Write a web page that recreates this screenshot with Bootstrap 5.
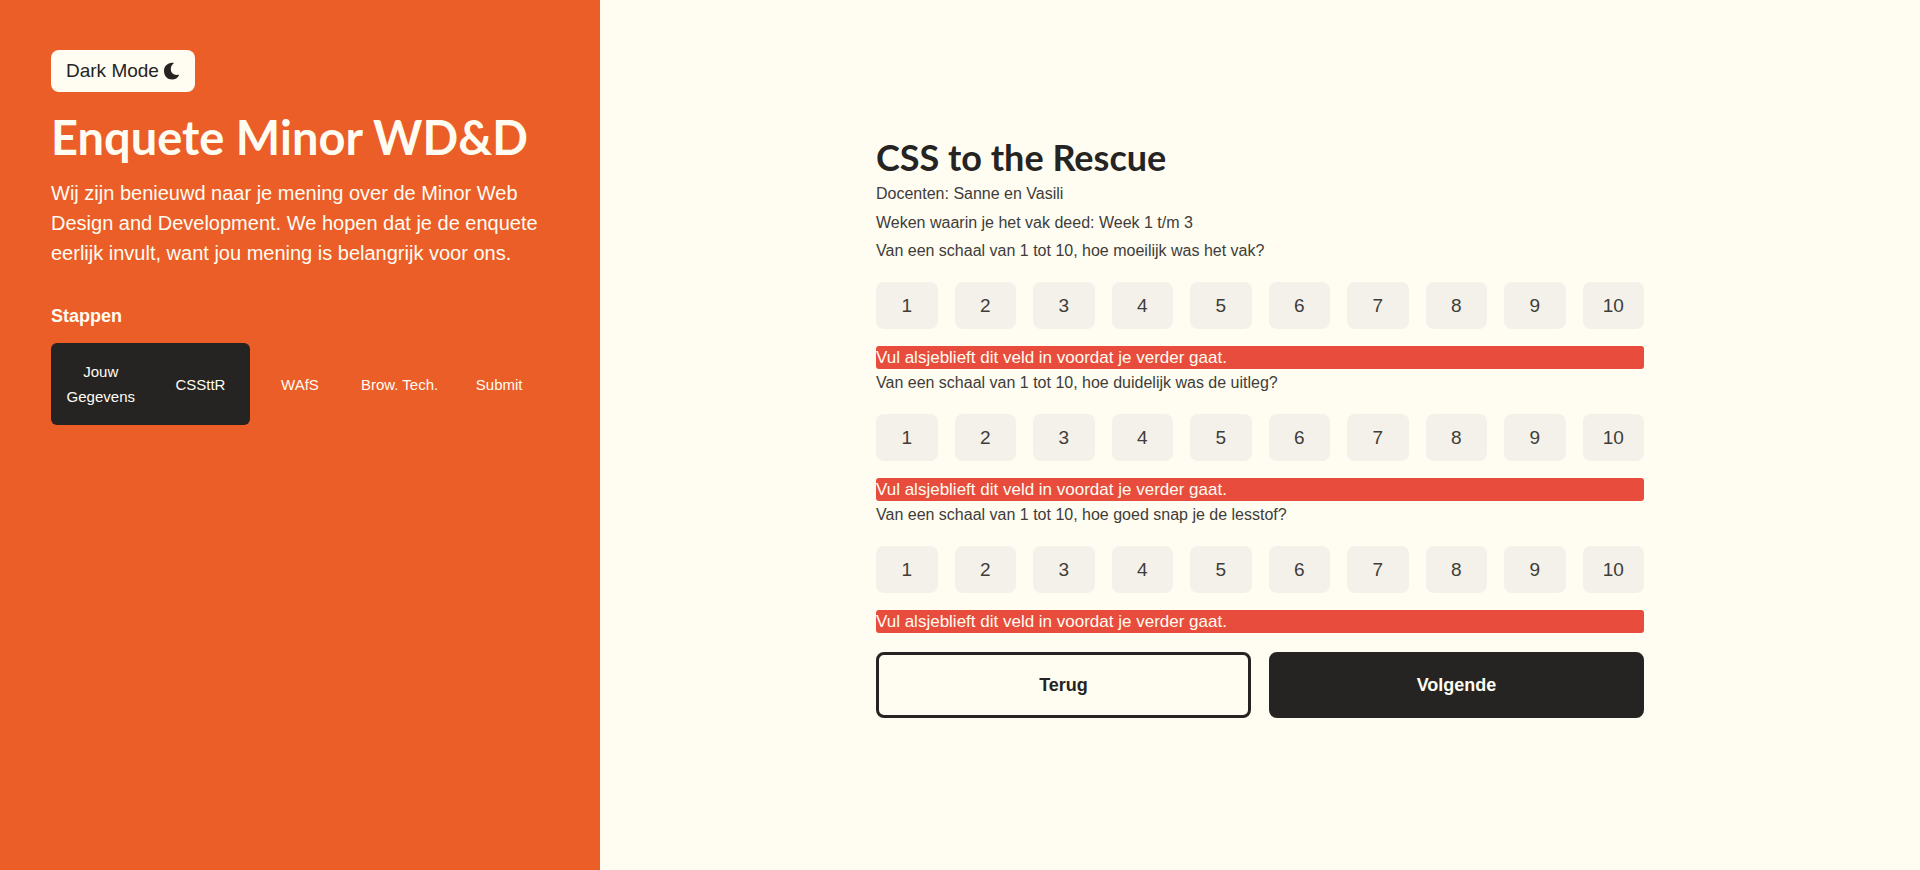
<!DOCTYPE html>
<html lang="nl">
<head>
<meta charset="utf-8">
<meta name="viewport" content="width=device-width, initial-scale=1">
<title>Enquete Minor WD&amp;D</title>
<link href="https://cdn.jsdelivr.net/npm/bootstrap@5.3.0/dist/css/bootstrap.min.css" rel="stylesheet">
<style>
:root { --orange: #eb5e28; --cream: #fffcf2; --ink: #252422; --soft-ink: #403d39; --tile: #f4f1eb; --error: #e74c3c; }
body { background: var(--cream); color: var(--soft-ink); font-family: "Liberation Sans", Arial, sans-serif; font-size: 16px; line-height: 28px; }
.intro { background: var(--orange); color: var(--cream); padding: 50px 51px; }
h1, h2 { font-family: Lato, sans-serif; font-weight: 700; margin: 0; }
h1 { font-size: 47px; line-height: 60px; padding-top: 15px; }
h2 { font-size: 36px; line-height: 44px; color: var(--ink); }
h3 { font-size: 18px; line-height: 28px; font-weight: 700; margin-bottom: 13px; }
.mode-btn { background: var(--cream); color: var(--ink); border: 0; border-radius: 8px; padding: 6px 15px; font-size: 19px; line-height: 30px; }
.intro-text { font-size: 20px; line-height: 30px; margin: 11px 0 34px; }
.steps { display: grid; grid-template-columns: repeat(5, 1fr); font-size: 15px; line-height: 25px; }
.steps li { display: flex; }
.steps a { flex: 1; display: flex; align-items: center; justify-content: center; text-align: center; color: var(--cream); text-decoration: none; padding: 16px 0; }
.steps .done { background: var(--ink); }
.steps li:first-child { border-radius: 6px 0 0 6px; }
.steps li:nth-child(2) { border-radius: 0 6px 6px 0; }
.survey { max-width: 768px; padding-top: 135px; }
.details { line-height: 29px; }
.scale { display: grid; grid-template-columns: repeat(10, 1fr); gap: 17px; margin: 17px 0; }
.scale label { background: var(--tile); border-radius: 8px; text-align: center; font-size: 19px; line-height: 47px; cursor: pointer; }
.scale .btn-check:checked + label { background: var(--ink); color: var(--cream); }
.error-line { background: var(--error); color: var(--cream); border-radius: 3px; font-size: 17px; line-height: 23px; }
.step-btn { border: 3px solid var(--ink); border-radius: 8px; padding: 15px; font: 700 18px/30px "Liberation Sans", Arial, sans-serif; }
.step-btn.back { background: transparent; color: var(--ink); }
.step-btn.next { background: var(--ink); color: var(--cream); }
.actions { gap: 18px; margin-top: 19px; }
@media (min-width: 992px) { .intro { width: 31.25%; } }
</style>
</head>
<body>
<div class="d-lg-flex min-vh-100">
  <aside class="intro flex-shrink-0">
    <button type="button" class="mode-btn d-inline-flex align-items-center gap-1">Dark Mode
      <svg width="17" height="18" viewBox="0 0 17 18" fill="currentColor" aria-hidden="true"><path d="M10.200.8C5 .2 1 4 1 9s3.500 8.500 8.200 8.500c3 0 5.300-1.400 6.700-4 .2-.5-.1-.8-.6-.7C11 13.600 7.800 11 7.800 7c0-2.300.9-4 2.600-5.300.4-.4.3-.8-.2-.9z"/></svg>
    </button>
    <h1>Enquete Minor WD&amp;D</h1>
    <p class="intro-text">Wij zijn benieuwd naar je mening over de Minor Web Design and Development. We hopen dat je de enquete eerlijk invult, want jou mening is belangrijk voor ons.</p>
    <h3>Stappen</h3>
    <nav aria-label="Stappen">
      <ol class="steps list-unstyled mb-0">
        <li class="done"><a href="#">Jouw<br>Gegevens</a></li>
        <li class="done"><a href="#">CSSttR</a></li>
        <li><a href="#">WAfS</a></li>
        <li><a href="#">Brow. Tech.</a></li>
        <li><a href="#">Submit</a></li>
      </ol>
    </nav>
  </aside>
  <main class="flex-grow-1 px-3 pb-5">
    <form class="survey mx-auto">
      <h2>CSS to the Rescue</h2>
      <p class="details mb-0">Docenten: Sanne en Vasili<br>Weken waarin je het vak deed: Week 1 t/m 3</p>
      <div role="radiogroup" aria-labelledby="q1">
        <div id="q1">Van een schaal van 1 tot 10, hoe moeilijk was het vak?</div>
        <div class="scale">
          <input class="btn-check" type="radio" name="a" id="a1"><label for="a1">1</label>
          <input class="btn-check" type="radio" name="a" id="a2"><label for="a2">2</label>
          <input class="btn-check" type="radio" name="a" id="a3"><label for="a3">3</label>
          <input class="btn-check" type="radio" name="a" id="a4"><label for="a4">4</label>
          <input class="btn-check" type="radio" name="a" id="a5"><label for="a5">5</label>
          <input class="btn-check" type="radio" name="a" id="a6"><label for="a6">6</label>
          <input class="btn-check" type="radio" name="a" id="a7"><label for="a7">7</label>
          <input class="btn-check" type="radio" name="a" id="a8"><label for="a8">8</label>
          <input class="btn-check" type="radio" name="a" id="a9"><label for="a9">9</label>
          <input class="btn-check" type="radio" name="a" id="a10"><label for="a10">10</label>
        </div>
        <div class="error-line">Vul alsjeblieft dit veld in voordat je verder gaat.</div>
      </div>
      <div role="radiogroup" aria-labelledby="q2">
        <div id="q2">Van een schaal van 1 tot 10, hoe duidelijk was de uitleg?</div>
        <div class="scale">
          <input class="btn-check" type="radio" name="b" id="b1"><label for="b1">1</label>
          <input class="btn-check" type="radio" name="b" id="b2"><label for="b2">2</label>
          <input class="btn-check" type="radio" name="b" id="b3"><label for="b3">3</label>
          <input class="btn-check" type="radio" name="b" id="b4"><label for="b4">4</label>
          <input class="btn-check" type="radio" name="b" id="b5"><label for="b5">5</label>
          <input class="btn-check" type="radio" name="b" id="b6"><label for="b6">6</label>
          <input class="btn-check" type="radio" name="b" id="b7"><label for="b7">7</label>
          <input class="btn-check" type="radio" name="b" id="b8"><label for="b8">8</label>
          <input class="btn-check" type="radio" name="b" id="b9"><label for="b9">9</label>
          <input class="btn-check" type="radio" name="b" id="b10"><label for="b10">10</label>
        </div>
        <div class="error-line">Vul alsjeblieft dit veld in voordat je verder gaat.</div>
      </div>
      <div role="radiogroup" aria-labelledby="q3">
        <div id="q3">Van een schaal van 1 tot 10, hoe goed snap je de lesstof?</div>
        <div class="scale">
          <input class="btn-check" type="radio" name="c" id="c1"><label for="c1">1</label>
          <input class="btn-check" type="radio" name="c" id="c2"><label for="c2">2</label>
          <input class="btn-check" type="radio" name="c" id="c3"><label for="c3">3</label>
          <input class="btn-check" type="radio" name="c" id="c4"><label for="c4">4</label>
          <input class="btn-check" type="radio" name="c" id="c5"><label for="c5">5</label>
          <input class="btn-check" type="radio" name="c" id="c6"><label for="c6">6</label>
          <input class="btn-check" type="radio" name="c" id="c7"><label for="c7">7</label>
          <input class="btn-check" type="radio" name="c" id="c8"><label for="c8">8</label>
          <input class="btn-check" type="radio" name="c" id="c9"><label for="c9">9</label>
          <input class="btn-check" type="radio" name="c" id="c10"><label for="c10">10</label>
        </div>
        <div class="error-line">Vul alsjeblieft dit veld in voordat je verder gaat.</div>
      </div>
      <div class="actions d-flex">
        <button type="button" class="step-btn back flex-fill w-50">Terug</button>
        <button type="button" class="step-btn next flex-fill w-50">Volgende</button>
      </div>
    </form>
  </main>
</div>
<script src="https://cdn.jsdelivr.net/npm/bootstrap@5.3.0/dist/js/bootstrap.bundle.min.js"></script>
</body>
</html>
